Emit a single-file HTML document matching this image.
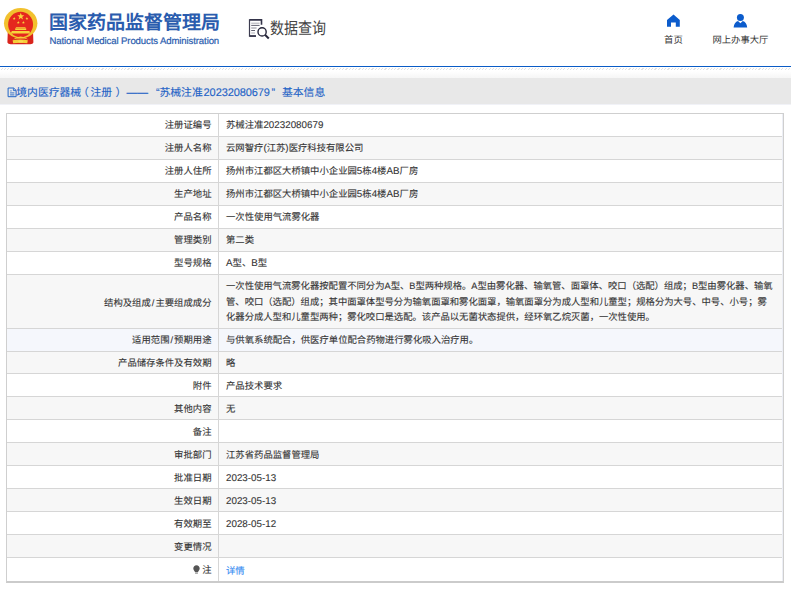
<!DOCTYPE html>
<html lang="zh-CN">
<head>
<meta charset="utf-8">
<style>
*{margin:0;padding:0;box-sizing:border-box}
html,body{width:791px;height:591px;overflow:hidden;background:#fff}
body{font-family:"Liberation Sans",sans-serif;color:#333;position:relative;text-rendering:geometricPrecision}
.n{font-size:9.8px}
.abs{position:absolute}
#hdr{position:absolute;left:0;top:0;width:791px;height:66px;background:#fff}
#blue{position:absolute;left:0;top:66px;width:791px;height:1px;background:#0a5cc6}
#hatch{position:absolute;left:0;top:68px;width:791px;height:2.2px;
 background:repeating-linear-gradient(135deg,#fff 0,#fff 1.5px,#e2e2e2 1.5px,#e2e2e2 2.3px)}
#grad{position:absolute;left:0;top:70.5px;width:791px;height:7.5px;background:linear-gradient(#fff,#f6f6f6)}
#bar{position:absolute;left:0;top:78px;width:791px;height:26px;background:#e8e8e8}
#bar .t{position:absolute;left:0;top:0;height:26px;width:400px;line-height:26px;font-size:10.8px;color:#1f63c6;white-space:nowrap}
#bar .t span{top:1.5px;-webkit-text-stroke:0.12px #1f63c6}
#tbl{position:absolute;left:6px;top:113px;width:778px;border:1px solid #cfcfcf;border-bottom:2px solid #cbcbcb}
.r{height:23px;border-bottom:1px solid #d6d6d6;position:relative;-webkit-text-stroke:0.1px #333;font-size:9.35px;line-height:22px;white-space:nowrap}
.r:last-child{border-bottom:none;height:23px}
.r.s{height:22px}
.r.lo .l{padding-top:1px}
.r.lo .v{top:1px}
.r.lo2 .l{padding-top:1px}
.r.lo2 .v{top:2px}
.r.g{background:#f7f7f7}
.r.h{background:#f5f7fc}
.l{position:absolute;left:0;top:0;width:212px;height:100%;border-right:1px solid #d6d6d6;text-align:right;padding-right:6.5px}
.v{position:absolute;left:219px;top:0}
.r.tall{height:54px}
.r.tall .l{line-height:53px;padding-top:1.5px}
.r.tall .v{line-height:15.6px;top:4px;letter-spacing:-0.02px}
.r.tall .n{font-size:9.2px}
a{color:#378cf2;text-decoration:none;-webkit-text-stroke:0.1px #378cf2}
</style>
</head>
<body>
<div id="hdr">
  <!-- emblem -->
  <svg class="abs" style="left:0;top:0" width="42" height="48" viewBox="0 0 42 48">
    <path d="M7.8 31 L7.4 42.5 Q8 44.4 11 44.3 L30 44.3 Q33 44.4 33.4 42.5 L33 31 Z" fill="#d9241c"/>
    <ellipse cx="20.7" cy="23.3" rx="16.7" ry="15.2" fill="#f2c12e"/>
    <ellipse cx="20.6" cy="24.45" rx="12.45" ry="12.75" fill="#e5281e"/>
    <path d="M13 39.5 Q20.7 33.5 28.5 39.5 Q20.7 37 13 39.5 Z" fill="#f5cf3a"/>
    <path d="M12.6 40.2 Q20.7 39 27.8 40.2 L27.3 43.2 Q20.7 42.2 13.2 43.2 Z" fill="#f5cf3a"/>
    <ellipse cx="20.7" cy="41.5" rx="2.6" ry="1.2" fill="#f9dc55"/>
    <polygon points="20.8,12.8 21.7,15.3 24.3,15.3 22.2,16.9 23,19.4 20.8,17.9 18.6,19.4 19.4,16.9 17.3,15.3 19.9,15.3" fill="#f7d33c"/>
    <polygon points="14.2,17.1 14.6,18.1 15.6,18.1 14.8,18.8 15.1,19.8 14.2,19.2 13.3,19.8 13.6,18.8 12.8,18.1 13.8,18.1" fill="#f7d33c"/>
    <polygon points="26.9,17.1 27.3,18.1 28.3,18.1 27.5,18.8 27.8,19.8 26.9,19.2 26,19.8 26.3,18.8 25.5,18.1 26.5,18.1" fill="#f7d33c"/>
    <polygon points="18.3,21.1 18.7,22.1 19.7,22.1 18.9,22.8 19.2,23.8 18.3,23.2 17.4,23.8 17.7,22.8 16.9,22.1 17.9,22.1" fill="#f7d33c"/>
    <polygon points="23.4,21.1 23.8,22.1 24.8,22.1 24,22.8 24.3,23.8 23.4,23.2 22.5,23.8 22.8,22.8 22,22.1 23,22.1" fill="#f7d33c"/>
    <path d="M16.2 27.3 H25.2 L26 28.3 H15.4 Z" fill="#f7d33c"/>
    <rect x="15.2" y="28.4" width="11" height="1.6" fill="#f7d33c"/>
    <path d="M11.8 30.9 H29.5 L30 33.6 H10.8 Z" fill="#f7d33c"/>
  </svg>
  <div class="abs" style="left:49px;top:12.3px;font-size:19px;font-weight:bold;color:#2a5cae;line-height:24px;white-space:nowrap">国家药品监督管理局</div>
  <div class="abs" style="left:49.5px;top:35.9px;font-size:9.6px;color:#2a5cae;line-height:11px;letter-spacing:-0.12px;-webkit-text-stroke:0.2px #2a5cae;white-space:nowrap">National Medical Products Administration</div>
  <!-- data query icon -->
  <svg class="abs" style="left:245px;top:15px" width="30" height="27" viewBox="0 0 30 27">
    <path d="M4.5 4.9 H16.5 V9.8" fill="none" stroke="#34344a" stroke-width="1.6"/>
    <path d="M4.5 4.3 V21.1 H11" fill="none" stroke="#3c3c50" stroke-width="1.2"/>
    <path d="M4.5 21 H11" fill="none" stroke="#34344a" stroke-width="1.6"/>
    <path d="M6.2 8.2 H14.6" stroke="#a0a0a8" stroke-width="0.9"/>
    <path d="M6.2 10.4 H14.6" stroke="#3a3a4c" stroke-width="0.8"/>
    <path d="M6.2 13 H11.6" stroke="#80808a" stroke-width="0.9"/>
    <path d="M6.2 15.5 H10" stroke="#3a3a4c" stroke-width="0.8"/>
    <path d="M6.2 18 H10" stroke="#a8a8b0" stroke-width="0.9"/>
    <circle cx="17.1" cy="16.9" r="4.1" fill="#fff" stroke="#26263a" stroke-width="1.4"/>
    <path d="M20.2 20 L23.8 23.5" stroke="#26263a" stroke-width="2" stroke-linecap="butt"/>
  </svg>
  <div class="abs" style="left:270px;top:14.5px;font-size:14px;color:#444;line-height:24px;white-space:nowrap;transform:scaleY(1.17);transform-origin:0 5px">数据查询</div>
  <!-- home -->
  <svg class="abs" style="left:667px;top:14px" width="13" height="13" viewBox="0 0 13 13">
    <path d="M0 6 L6.5 0.5 L12.8 6 V12.8 H8.8 V8.5 H4 V12.8 H0 Z" fill="#0c5ccc"/>
  </svg>
  <div class="abs" style="left:664px;top:33.8px;font-size:9.4px;line-height:12px;color:#333;white-space:nowrap">首页</div>
  <!-- person -->
  <svg class="abs" style="left:733px;top:13px" width="15" height="15" viewBox="0 0 15 15">
    <circle cx="7.4" cy="4.4" r="3.5" fill="#0c5ccc"/>
    <path d="M0.6 14.6 Q1.2 9 5 8 L7.4 10.2 L9.8 8 Q13.6 9 14.2 14.6 Z" fill="#0c5ccc"/>
  </svg>
  <div class="abs" style="left:712.5px;top:33.8px;font-size:9.3px;line-height:12px;color:#333;white-space:nowrap">网上办事大厅</div>
</div>
<div id="blue"></div>
<div id="hatch"></div>
<div id="grad"></div>
<div class="abs" style="left:0;top:104px;width:791px;height:1px;background:#f1f2f7"></div>
<div id="bar">
  <svg class="abs" style="left:6.5px;top:8.5px" width="11" height="11" viewBox="0 0 11 11">
    <path d="M1.1 1 H6.6 L9.1 3.4 V9.7 H1.1 Z" fill="none" stroke="#1f63c6" stroke-width="1" stroke-linejoin="round"/>
    <path d="M6.4 1.2 V3.6 H8.9" fill="none" stroke="#1f63c6" stroke-width="0.9"/>
    <path d="M3.3 3.9 H4.6 M3.1 5.9 H7.4 M3.1 7.9 H7.4" stroke="#1f63c6" stroke-width="0.9"/>
  </svg>
  <div class="t">
    <span class="abs" style="left:16.3px">境内医疗器械</span>
    <span class="abs" style="left:78px">（</span>
    <span class="abs" style="left:90.5px">注册</span>
    <span class="abs" style="left:115.5px">）</span>
    <span class="abs" style="left:126.5px">——</span>
    <span class="abs" style="left:156px">“</span>
    <span class="abs" style="left:159.5px">苏械注准</span>
    <span class="abs" style="left:203.6px;font-size:11px;letter-spacing:-0.1px">20232080679</span>
    <span class="abs" style="left:271.5px">”</span>
    <span class="abs" style="left:282px">基本信息</span>
  </div>
</div>
<div id="tbl">
  <div style="position:absolute;right:0;top:0;bottom:0;width:1px;background:#eceef5;z-index:2"></div>
  <div class="r"><div class="l">注册证编号</div><div class="v">苏械注准<span class="n">20232080679</span></div></div>
  <div class="r g"><div class="l">注册人名称</div><div class="v">云网智疗<span class="n">(</span>江苏<span class="n">)</span>医疗科技有限公司</div></div>
  <div class="r"><div class="l">注册人住所</div><div class="v">扬州市江都区大桥镇中小企业园<span class="n">5</span>栋<span class="n">4</span>楼<span class="n">AB</span>厂房</div></div>
  <div class="r g"><div class="l">生产地址</div><div class="v">扬州市江都区大桥镇中小企业园<span class="n">5</span>栋<span class="n">4</span>楼<span class="n">AB</span>厂房</div></div>
  <div class="r"><div class="l">产品名称</div><div class="v">一次性使用气流雾化器</div></div>
  <div class="r g"><div class="l">管理类别</div><div class="v">第二类</div></div>
  <div class="r"><div class="l">型号规格</div><div class="v"><span class="n">A</span>型、<span class="n">B</span>型</div></div>
  <div class="r g tall"><div class="l">结构及组成<span style="margin:0 1px">/</span>主要组成成分</div><div class="v">一次性使用气流雾化器按配置不同分为<span class="n">A</span>型、<span class="n">B</span>型两种规格。<span class="n">A</span>型由雾化器、输氧管、面罩体、咬口（选配）组成；<span class="n">B</span>型由雾化器、输氧<br>管、咬口（选配）组成；其中面罩体型号分为输氧面罩和雾化面罩，输氧面罩分为成人型和儿童型；规格分为大号、中号、小号；雾<br>化器分成人型和儿童型两种；雾化咬口是选配。该产品以无菌状态提供，经环氧乙烷灭菌，一次性使用。</div></div>
  <div class="r h"><div class="l">适用范围<span style="margin:0 1px">/</span>预期用途</div><div class="v">与供氧系统配合，供医疗单位配合药物进行雾化吸入治疗用。</div></div>
  <div class="r g s"><div class="l">产品储存条件及有效期</div><div class="v">略</div></div>
  <div class="r lo"><div class="l">附件</div><div class="v">产品技术要求</div></div>
  <div class="r g lo"><div class="l">其他内容</div><div class="v">无</div></div>
  <div class="r lo"><div class="l">备注</div><div class="v"></div></div>
  <div class="r g lo"><div class="l">审批部门</div><div class="v">江苏省药品监督管理局</div></div>
  <div class="r lo"><div class="l">批准日期</div><div class="v"><span class="n">2023-05-13</span></div></div>
  <div class="r g lo"><div class="l">生效日期</div><div class="v"><span class="n">2023-05-13</span></div></div>
  <div class="r lo"><div class="l">有效期至</div><div class="v"><span class="n">2028-05-12</span></div></div>
  <div class="r g lo"><div class="l">变更情况</div><div class="v"></div></div>
  <div class="r lo2"><div class="l"><svg width="7" height="9" viewBox="0 0 7 9" style="vertical-align:-0.5px;margin-right:2px"><path d="M3.5 0.3 C1.6 0.3 0.3 1.7 0.3 3.4 C0.3 4.7 1.1 5.4 1.6 6.2 L1.9 7.1 H5.1 L5.4 6.2 C5.9 5.4 6.7 4.7 6.7 3.4 C6.7 1.7 5.4 0.3 3.5 0.3 Z" fill="#555"/><rect x="2.1" y="7.5" width="2.8" height="1.1" fill="#777"/></svg>注</div><div class="v"><a>详情</a></div></div>
</div>
</body>
</html>
